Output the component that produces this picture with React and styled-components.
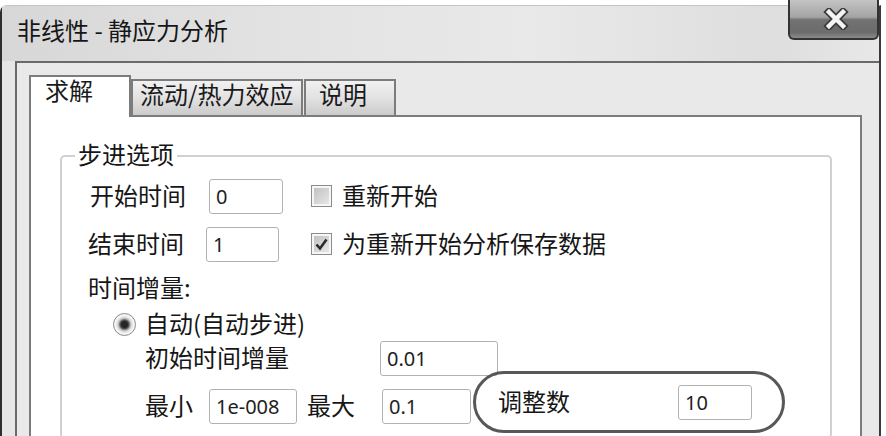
import React from "react";
import styled, { createGlobalStyle } from "styled-components";

const Global = createGlobalStyle`
  body {
    margin: 0;
    background: #ffffff;
    overflow: hidden;
    font-family: "Noto Sans CJK SC", "Noto Sans", sans-serif;
    color: #161616;
  }
`

const Window = styled.div`
  margin-top: 5px;
  width: 881px;
  height: 440px;
  box-sizing: border-box;
  border-left: 2px solid #2e2e2e;
  border-right: 2px solid #3a3a3a;
  border-top: 1px solid #c4c4c4;
  border-top-left-radius: 7px;
  background: #e6e6e6;
  display: flex;
  flex-direction: column;
`
const TitleBar = styled.div`
  height: 55px;
  flex-shrink: 0;
  display: flex;
  align-items: center;
  justify-content: space-between;
  padding-left: 15px;
  background: linear-gradient(90deg, #d7d7d7 0%, #e2e2e2 30%, #e9e9e9 60%, #dedede 88%, #e8e8e8 100%);
`
const Title = styled.div`
  font-size: 24px;
  line-height: 29px;
  margin-bottom: 8px;
`
const CloseButton = styled.div`
  align-self: flex-start;
  margin-top: -6px;
  width: 91px;
  height: 40px;
  box-sizing: border-box;
  border: 2px solid #333;
  border-top: none;
  border-radius: 0 0 6px 6px;
  background: linear-gradient(#c4c4c4 0%, #a4a4a4 45%, #727272 52%, #6c6c6c 85%, #8a8a8a 100%);
  display: flex;
  align-items: center;
  justify-content: center;
  padding-left: 4px;
`
const ClientFrame = styled.div`
  flex: 1;
  margin-left: 13px;
  border-top: 2px solid #6a6a6a;
  border-left: 2px solid #6a6a6a;
  background: #e9e9e9;
  padding: 12px 17px 0 12px;
  display: flex;
  flex-direction: column;
`
const TabStrip = styled.div`
  display: flex;
  align-items: flex-end;
  height: 40px;
  position: relative;
  z-index: 1;
`
const Tab = styled.div`
  width: ${p => p.$w}px;
  height: ${p => (p.$active ? 42 : 36)}px;
  margin-bottom: ${p => (p.$active ? -2 : 0)}px;
  margin-right: ${p => p.$gap || 0}px;
  box-sizing: border-box;
  border: 2px solid #7c7c7c;
  border-bottom: none;
  background: ${p => (p.$active ? "#fff" : "linear-gradient(#f1f1f1 0%, #e2e2e2 50%, #cbcbcb 100%)")};
  font-size: 24px;
  line-height: 26px;
  padding: 0 0 0 ${p => p.$pl}px;
  color: #1a1a1a;
`
const TabPage = styled.div`
  flex: 1;
  background: #fff;
  border: 2px solid #7c7c7c;
  border-bottom: none;
  display: flex;
  flex-direction: column;
  align-items: flex-start;
`
const GroupBox = styled.fieldset`
  margin: 24px 0 0 29px;
  width: 772px;
  box-sizing: border-box;
  padding: 2px 0 0 0;
  border: 2px solid #d0d0d0;
  border-radius: 5px;
  min-width: 0;
`
const Legend = styled.legend`
  margin-left: 13px;
  padding: 0 3px 3px;
  font-size: 24px;
  line-height: 26px;
`
const Row = styled.div`
  height: ${p => p.$h}px;
  padding-left: ${p => p.$pl}px;
  display: flex;
  align-items: center;
`
const Label = styled.span`
  font-size: 24px;
  line-height: 29px;
  padding-bottom: 4px;
  margin-left: ${p => p.$ml || 0}px;
  white-space: nowrap;
`
const Field = styled.input`
  width: ${p => p.$w}px;
  height: 35px;
  box-sizing: border-box;
  margin: 0 0 0 ${p => p.$ml || 0}px;
  padding: 0 6px;
  border: 1.5px solid #b2b2b2;
  border-radius: 3px;
  background: #fff;
  font-family: "Noto Sans", sans-serif;
  font-size: 20px;
  color: #1e1e1e;
  outline: none;
  flex-shrink: 0;
`
const CheckBox = styled.span`
  width: 21px;
  height: 22px;
  box-sizing: border-box;
  margin-left: ${p => p.$ml}px;
  border: 1.5px solid #8c8c8c;
  background: linear-gradient(135deg, #bdbdbd 0%, #d6d6d6 55%, #ececec 100%);
  box-shadow: inset 0 0 0 2px #f6f6f6;
  display: flex;
  align-items: center;
  justify-content: center;
  flex-shrink: 0;
`
const Radio = styled.span`
  width: 23px;
  height: 23px;
  box-sizing: border-box;
  border-radius: 50%;
  border: 1.5px solid #8a8a8a;
  background: radial-gradient(circle, #262626 0 3px, #5a5a5a 4.5px, #b8b8b8 6px, #e4e4e4 7.5px, #f7f7f7 9.5px);
  flex-shrink: 0;
`
const Highlight = styled.div`
  margin-left: ${p => p.$ml}px;
  margin-bottom: 8px;
  width: 312px;
  height: 62px;
  box-sizing: border-box;
  border: 3px solid #585858;
  border-radius: 31px;
  padding-left: 22px;
  display: flex;
  align-items: center;
  flex-shrink: 0;
`

function CloseIcon() {
  return (
    <svg width="26" height="22" viewBox="0 0 26 22">
      <path d="M6 4 L20 18 M20 4 L6 18" stroke="#3c3c3c" strokeWidth="8" strokeLinecap="square" fill="none" />
      <path d="M6 4 L20 18 M20 4 L6 18" stroke="#f4f4f4" strokeWidth="4.5" strokeLinecap="square" fill="none" />
    </svg>
  )
}

function Check() {
  return (
    <svg width="15" height="15" viewBox="0 0 15 15">
      <path d="M2.5 7.5 L6 11.5 L12.5 2.5" stroke="#2a2a2a" strokeWidth="2.6" fill="none" />
    </svg>
  )
}

export default function App() {
  return (
    <>
      <Global />
      <Window>
        <TitleBar>
          <Title>非线性 - 静应力分析</Title>
          <CloseButton><CloseIcon /></CloseButton>
        </TitleBar>
        <ClientFrame>
          <TabStrip>
            <Tab $active $w={102} $pl={14}>求解</Tab>
            <Tab $w={172} $pl={7} $gap={1}>流动/热力效应</Tab>
            <Tab $w={92} $pl={13}>说明</Tab>
          </TabStrip>
          <TabPage>
            <GroupBox>
              <Legend>步进选项</Legend>
              <Row $h={48} $pl={28}>
                <Label>开始时间</Label>
                <Field $w={74} $ml={23} readOnly value="0" />
                <CheckBox $ml={28} />
                <Label $ml={10}>重新开始</Label>
              </Row>
              <Row $h={48} $pl={26}>
                <Label>结束时间</Label>
                <Field $w={73} $ml={22} readOnly value="1" />
                <CheckBox $ml={32}><Check /></CheckBox>
                <Label $ml={10}>为重新开始分析保存数据</Label>
              </Row>
              <Row $h={40} $pl={26}>
                <Label>时间增量:</Label>
              </Row>
              <Row $h={33} $pl={51}>
                <Radio />
                <Label $ml={9}>自动(自动步进)</Label>
              </Row>
              <Row $h={34} $pl={83}>
                <Label>初始时间增量</Label>
                <Field $w={118} $ml={91} readOnly value="0.01" />
              </Row>
              <Row $h={62} $pl={83}>
                <Label>最小</Label>
                <Field $w={88} $ml={16} readOnly value="1e-008" />
                <Label $ml={10}>最大</Label>
                <Field $w={89} $ml={27} readOnly value="0.1" />
                <Highlight $ml={2}>
                  <Label>调整数</Label>
                  <Field $w={74} $ml={108} readOnly value="10" />
                </Highlight>
              </Row>
            </GroupBox>
          </TabPage>
        </ClientFrame>
      </Window>
    </>
  )
}
